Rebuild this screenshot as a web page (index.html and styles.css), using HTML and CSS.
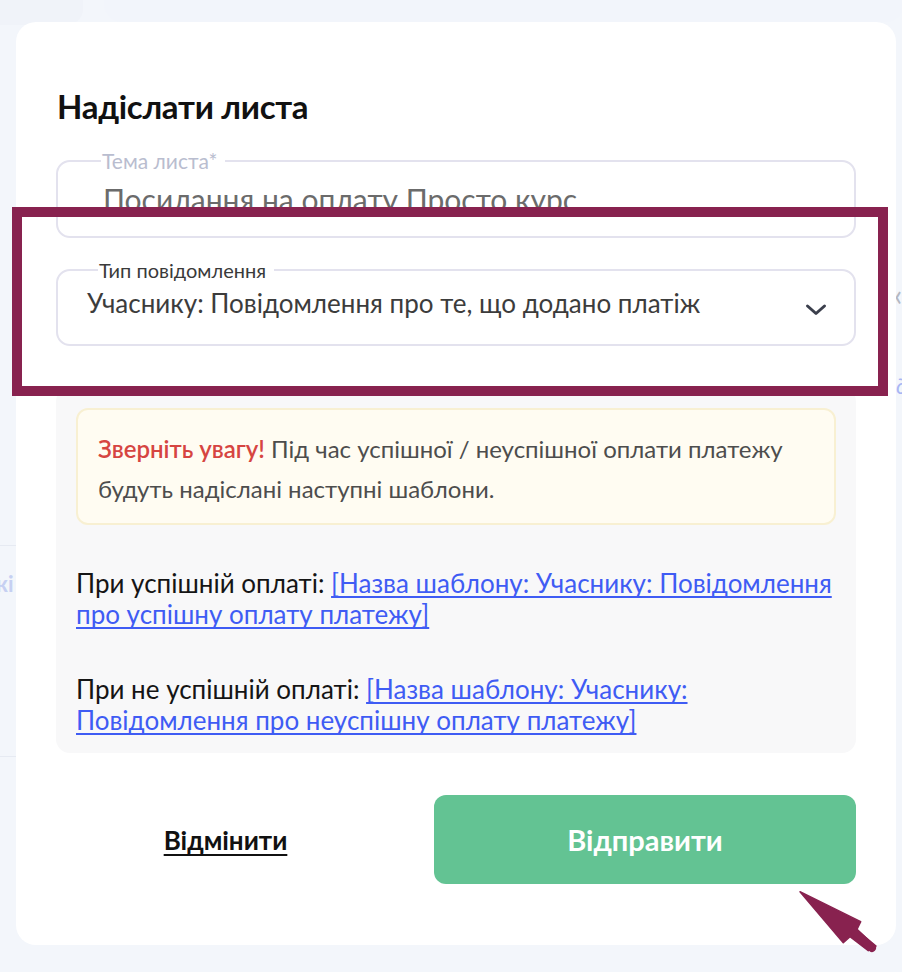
FILE: index.html
```html
<!DOCTYPE html>
<html lang="uk">
<head>
<meta charset="utf-8">
<title>Надіслати листа</title>
<link rel="stylesheet" href="styles.css">
</head>
<body>
<div class="backdrop">
  <div class="bg-top-left"></div>
  <div class="bg-top-mid"></div>
  <div class="bg-left-line bg-line-a"></div>
  <div class="bg-left-line bg-line-b"></div>
  <div class="bg-left-text">кі</div>
  <div class="bg-right-chev">‹</div>
  <div class="bg-right-text">д</div>
</div>

<div class="modal">
  <h1 class="title">Надіслати листа</h1>

  <fieldset class="field field-subject">
    <legend class="field-label muted">Тема листа*</legend>
    <div class="field-value subject-value">Посилання на оплату Просто курс</div>
  </fieldset>

  <fieldset class="field field-select">
    <legend class="field-label">Тип повідомлення</legend>
    <div class="select-row">
      <span class="field-value">Учаснику: Повідомлення про те, що додано платіж</span>
      <svg class="chevron" width="24" height="16" viewBox="0 0 24 16"><path d="M3.5 4 L12 11.5 L20.5 4" fill="none" stroke="#3b3f4c" stroke-width="3" stroke-linecap="round" stroke-linejoin="round"/></svg>
    </div>
  </fieldset>

  <div class="info-panel">
    <div class="notice">
      <span class="notice-accent">Зверніть увагу!</span> Під час успішної / неуспішної оплати платежу будуть надіслані наступні шаблони.
    </div>
    <p class="template-line">При успішній оплаті: <a href="#" class="template-link">[Назва шаблону: Учаснику: Повідомлення про успішну оплату платежу]</a></p>
    <p class="template-line">При не успішній оплаті: <a href="#" class="template-link">[Назва шаблону: Учаснику: Повідомлення про неуспішну оплату платежу]</a></p>
  </div>

  <div class="actions">
    <div class="cancel-cell"><a href="#" class="cancel">Відмінити</a></div>
    <button class="submit">Відправити</button>
  </div>
</div>

<div class="highlight"></div>
<svg class="pointer" width="90" height="66" viewBox="0 0 90 66">
  <path d="M4 2.7 L64.7 32.7 L60.7 41 L80 57 L72.3 61.7 L54 47.7 L47.3 53.7 Z" fill="#88224f" stroke="#88224f" stroke-width="1.5" stroke-linejoin="round"/>
  <path d="M58 42 L76 59" stroke="#88224f" stroke-width="8" stroke-linecap="round"/>
</svg>
</body>
</html>
```

FILE: styles.css
```css
* { box-sizing: border-box; }

html, body {
  margin: 0;
  padding: 0;
}

body {
  background: #f3f6fb;
  font-family: "Lato", "Open Sans", sans-serif;
  color: #222;
  width: 902px;
  height: 972px;
  overflow: hidden;
  position: relative;
  padding: 22px 6px 0 16px;
}

.backdrop {
  position: absolute;
  inset: 0;
  pointer-events: none;
}

.bg-top-left {
  position: absolute;
  left: -20px;
  top: -30px;
  width: 103px;
  height: 55px;
  border-radius: 16px;
  background: #f0f3f9;
}

.bg-top-mid {
  position: absolute;
  left: 104px;
  top: -30px;
  width: 800px;
  height: 52px;
  border-radius: 18px;
  background: #f2f5fb;
}

.bg-left-line {
  position: absolute;
  left: 0;
  width: 16px;
  height: 1px;
  background: #e6eaf2;
}

.bg-line-a { top: 545px; }
.bg-line-b { top: 756px; }

.bg-left-text {
  position: absolute;
  left: -4px;
  top: 570px;
  font-size: 22px;
  font-weight: 700;
  color: #c6d0f2;
}

.bg-right-chev {
  position: absolute;
  left: 894px;
  top: 276px;
  font-size: 30px;
  color: #b4b8c2;
}

.bg-right-text {
  position: absolute;
  left: 896px;
  top: 372px;
  font-size: 22px;
  font-style: italic;
  color: #a9b6f4;
}

.modal {
  position: relative;
  width: 880px;
  height: 923px;
  background: #fff;
  border-radius: 20px;
  padding: 64px 40px 0 40px;
}

.title {
  margin: 0 0 25px 1px;
  font-size: 33px;
  line-height: 40px;
  font-weight: 700;
  color: #111;
  letter-spacing: -0.3px;
}

.field {
  margin: 0;
  border: 2px solid #e3e2ee;
  border-radius: 14px;
  padding: 0 26px 0 45px;
  min-width: 0;
}

.field-label {
  padding: 0 8px 0 1px;
  margin-left: -2px;
  font-size: 20px;
  line-height: 20px;
  color: #3a3a3a;
}

.field-label.muted {
  color: #b9bdcf;
  font-size: 21px;
}

.field-value {
  font-size: 26px;
  line-height: 32px;
  color: #3c3c3c;
}

.field-subject {
  height: 87px;
}

.subject-value {
  font-size: 30px;
  line-height: 36px;
  color: #6b6b6b;
  padding-top: 10px;
}

.field-select {
  margin-top: 22px;
  height: 86px;
  padding-left: 29px;
}

.field-select .field-label {
  margin-left: 11px;
}

.select-row {
  display: flex;
  align-items: center;
  justify-content: space-between;
  padding-top: 7px;
}

.chevron {
  margin-top: 14px;
  margin-right: 0;
}

.info-panel {
  margin-top: 42px;
  background: #f8f8f9;
  border-radius: 14px;
  padding: 20px 20px 20px 20px;
  height: 365px;
}

.notice {
  background: #fffcf2;
  border: 2px solid #f8f0d2;
  border-radius: 12px;
  padding: 19px 20px 14px 20px;
  font-size: 24px;
  line-height: 40px;
  color: #4d4d4d;
}

.notice-accent {
  color: #d64541;
  font-weight: 600;
}

.template-line {
  margin: 43px 0 0 0;
  font-size: 26px;
  line-height: 31px;
  color: #151515;
}

.template-line + .template-line {
  margin-top: 44px;
}

.template-link {
  color: #3f5cf4;
  text-decoration: underline;
  text-underline-offset: 3px;
  text-decoration-skip-ink: none;
}

.actions {
  display: grid;
  grid-template-columns: 339px 1fr;
  column-gap: 39px;
  margin-top: 42px;
  height: 89px;
}

.cancel-cell {
  display: flex;
  align-items: center;
  justify-content: center;
}

.cancel {
  font-size: 26px;
  font-weight: 700;
  color: #111;
  text-decoration: underline;
  text-underline-offset: 4px;
  text-decoration-thickness: 2px;
  text-decoration-skip-ink: none;
}

.submit {
  border: none;
  border-radius: 12px;
  background: #63c393;
  color: #fff;
  font-family: "Lato", "Open Sans", sans-serif;
  font-size: 29px;
  font-weight: 700;
  cursor: pointer;
}

.highlight {
  position: absolute;
  left: 12px;
  top: 207px;
  width: 876px;
  height: 189px;
  border: 10px solid #88224f;
  pointer-events: none;
}

.pointer {
  position: absolute;
  left: 796px;
  top: 889px;
}
```
